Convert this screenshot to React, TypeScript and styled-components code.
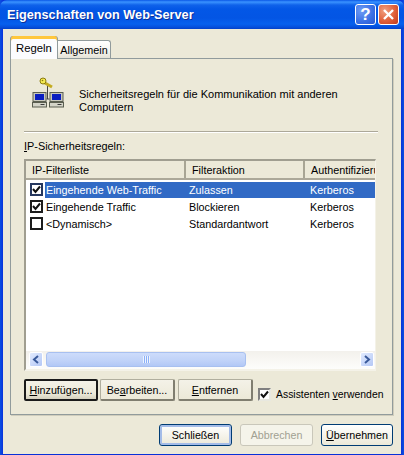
import React from "react";
import styled, { createGlobalStyle } from "styled-components";

const Global = createGlobalStyle`
  html, body { margin: 0; padding: 0; background: #0a3ad0; }
  #root { width: 404px; height: 455px; overflow: hidden; }
  * { box-sizing: border-box; }
`;

const Win = styled.div`
  width: 404px; height: 455px;
  display: flex; flex-direction: column;
  background: linear-gradient(90deg, #0a50e0 0, #0a3ee0 2px, #0831d9 3px, #0831d9 401px, #0a50e0 404px);
  font-family: "Liberation Sans", Arial, sans-serif;
  font-size: 10.8px; color: #000;
  padding: 0 3px 3px;
`;
const TitleBar = styled.div`
  height: 29px; flex: none; margin: 0 -3px;
  padding: 0 5px 0 7px;
  display: flex; align-items: center; justify-content: space-between;
  border-radius: 7px 7px 0 0;
  background: linear-gradient(180deg, #0a58e6 0, #3a93ff 2px, #0f62ea 5px, #0357e6 9px, #0355e4 18px, #0660ee 24px, #0550dd 27px, #0340c8 29px);
`;
const Title = styled.div`
  color: #fff; font-weight: 700; font-size: 12.7px;
  text-shadow: 1px 1px 0 #0c2f98;
`;
const TitleButtons = styled.div`display: flex; gap: 2px;`;
const Cap = styled.div<{ $red?: boolean }>`
  width: 21px; height: 21px; border: 1px solid #fff; border-radius: 3px;
  display: flex; align-items: center; justify-content: center;
  color: #fff; font: 700 17px "Liberation Sans", sans-serif;
  background: ${(p) => p.$red
    ? "radial-gradient(circle at 30% 30%, #f0a080, #e0603a 55%, #c03a1c)"
    : "radial-gradient(circle at 30% 30%, #6f9cf4, #3a6fe4 60%, #2a58d0)"};
`;
const Client = styled.div`
  flex: 1; background: #ece9d8;
  display: flex; flex-direction: column;
  padding: 7px 8px 8px 7px;
`;
const Tabs = styled.div`display: flex; align-items: flex-end; height: 22px; flex: none; position: relative; z-index: 1;`;
const Tab = styled.div<{ $active?: boolean }>`
  display: flex; align-items: center; justify-content: center;
  ${(p) => p.$active ? `
    width: 48px; background: #fcfcfe; font-size: 11.3px;
    border: 1px solid #919b9c; border-bottom: 0; border-top: 0;
    box-shadow: inset 0 3px 0 #ffc73c, inset 0 1px 0 #e68b2c;
    border-radius: 3px 3px 0 0; padding-top: 1px; margin-bottom: -1px; height: 23px;
  ` : `
    width: 53px; height: 18px; font-size: 10.8px;
    background: linear-gradient(180deg, #fff, #f4f3ee 60%, #e4e2d6);
    border: 1px solid #919b9c; border-left: 0; border-bottom: 0;
    border-radius: 0 3px 0 0;
  `}
`;
const Panel = styled.div`
  height: 357px; flex: none;
  background: #ece9d8;
  border: 1px solid #919b9c;
  box-shadow: 1px 1px 0 #d0cdbc;
  padding: 0 14px 0 13px;
  display: flex; flex-direction: column;
`;
const Intro = styled.div`
  height: 73px; flex: none;
  display: flex; align-items: flex-start;
  padding: 18px 0 0 8px;
  border-bottom: 1px solid #aca899;
  box-shadow: 0 1px 0 #fff;
`;
const IntroText = styled.div`
  margin: 11px 0 0 15px; width: 270px; line-height: 13px; font-size: 11px;
`;
const ListLabel = styled.div`
  margin-top: 8px; height: 13px; line-height: 13px; font-size: 10.9px;
`;
const ListView = styled.div`
  margin-top: 6px; width: 352px; height: 212px; flex: none;
  border-style: solid;
  border-color: #a09e90 #f4f2e8 #f4f2e8 #a09e90;
  border-width: 2px 1px 2px 2px;
  background: #fff;
  display: flex; flex-direction: column;
  overflow: hidden;
`;
const Head = styled.div`
  height: 19px; flex: none; display: flex;
  background: #ece9d8; border-bottom: 2px solid #aca899;
`;
const HeadCell = styled.div<{ $w: number; $last?: boolean }>`
  width: ${(p) => p.$w}px; flex: none; padding-left: 6px;
  white-space: nowrap; overflow: hidden;
  display: flex; align-items: center;
  ${(p) => !p.$last && "border-right: 2px solid #a8a594;"}
`;
const Rows = styled.div`flex: 1; padding-top: 1px; min-height: 0;`;
const Row = styled.div`
  height: 17px; display: flex; align-items: center; padding-left: 4px;
`;
const Check = styled.div<{ $thin?: boolean; $focus?: boolean }>`
  width: 13px; height: 13px; flex: none;
  border: 2px solid ${(p) => (p.$focus ? "#24365e" : "#1c1c1c")}; background: #fff;
  display: flex; align-items: center; justify-content: center;
  ${(p) => p.$thin && "border-color: #808080 #e8e8e0 #e8e8e0 #808080;"}
`;
const RowBody = styled.div<{ $sel?: boolean }>`
  flex: 1; height: 16px; margin-left: 2px;
  display: flex; align-items: center;
  ${(p) => p.$sel && "background: #316ac5; color: #fff;"}
`;
const Cell = styled.div<{ $w: number }>`
  width: ${(p) => p.$w}px; flex: none; padding-left: 1px; white-space: nowrap; overflow: hidden;
`;
const HBar = styled.div`
  height: 18px; flex: none; display: flex; align-items: stretch;
  background: linear-gradient(180deg, #f3f1ec, #fdfdfb);
  padding: 1px 1px 2px 3px;
`;
const ArrowBtn = styled.div`
  width: 14px; flex: none; border-radius: 2px; border: 1px solid #fff;
  background: linear-gradient(135deg, #e2ebfe, #b4c8f6);
  display: flex; align-items: center; justify-content: center;
`;
const Thumb = styled.div`
  width: 200px; margin-left: 3px; border-radius: 3px; border: 1px solid #a8c0f0;
  background: linear-gradient(180deg, #cddcfb, #c0d2f8 60%, #b2c8f6);
  display: flex; align-items: center; justify-content: center;
`;
const Grip = styled.div`
  width: 7px; height: 7px;
  background: repeating-linear-gradient(90deg, #eef4fe 0 1px, #8cb0f8 1px 2px);
`;
const Spacer = styled.div`flex: 1;`;
const Actions = styled.div`
  margin-top: 8px; display: flex; align-items: center;
`;
const Btn = styled.button<{ $w: number; $default?: boolean; $blue?: boolean; $off?: boolean; $ml?: number }>`
  width: ${(p) => p.$w}px; height: 22px; flex: none;
  margin-left: ${(p) => p.$ml ?? 0}px;
  padding: 0; font: 10.7px "Liberation Sans", Arial, sans-serif; color: #000;
  border-radius: 3px;
  background: linear-gradient(180deg, #fff 0, #f4f3ec 70%, #dcd8c8 100%);
  border: 1px solid #003c74;
  ${(p) => p.$default && "border: 2px solid #1a1a1a; border-radius: 2px; background: linear-gradient(180deg,#f4f2e8,#ece9d8 70%,#d4d0be);"}
  ${(p) => !p.$default && !p.$blue && !p.$off && "border: 1px solid #b0ae9e; border-right: 2px solid #807e70; border-bottom: 2px solid #807e70; border-radius: 2px; background: linear-gradient(180deg,#f4f2e8,#ece9d8);"}
  ${(p) => p.$blue && "box-shadow: inset 0 0 0 2px #a4bce8; background: linear-gradient(180deg,#fff,#ece9d8);"}
  ${(p) => p.$off && "border-color: #c9c7ba; color: #a1a192; background: #f5f4ea;"}
`;
const PlainBlueBtn = styled(Btn)`box-shadow: none;`;
const WizardCheck = styled.div`
  margin-left: 5px; display: flex; align-items: center; gap: 5px; white-space: nowrap; font-size: 10.4px; padding-top: 8px;
`;
const Footer = styled.div`
  margin-top: 9px; display: flex; justify-content: flex-end; gap: 8px;
`;

const Tick = () => (
  <svg width="9" height="9" viewBox="0 0 9 9"><path d="M1 4 L3.5 7 L8 1.5" fill="none" stroke="#111" strokeWidth="2" /></svg>
);
const Computer = ({ x }: { x: number }) => (
  <g transform={`translate(${x} 0)`}>
    <rect x="0" y="15" width="14" height="10" fill="#5a5e50" />
    <rect x="1" y="16" width="12" height="8" fill="#c8c8bc" />
    <rect x="2.5" y="17" width="9" height="6" fill="#0a1ec0" />
    <rect x="0" y="25.5" width="14" height="4.5" fill="#d4d4c8" stroke="#5a5e50" strokeWidth="1" />
    <rect x="8" y="27" width="4" height="1" fill="#3a3a3a" />
  </g>
);
const RuleIcon = () => (
  <svg width="32" height="32" viewBox="0 0 32 32">
    <Computer x={0.5} />
    <Computer x={17.5} />
    <path d="M14.5 22h3M15.5 22v-13" stroke="#444" fill="none" />
    <path d="M12 5.5 L20 10" stroke="#c4ac20" strokeWidth="3" />
    <circle cx="11" cy="4" r="3" fill="#f4ea50" stroke="#8a7a10" />
    <circle cx="10.5" cy="3.5" r="0.8" fill="#8a7a10" />
  </svg>
);
const Arrow = ({ right }: { right?: boolean }) => (
  <svg width="8" height="9" viewBox="0 0 8 9">
    <path d={right ? "M2 1 L6 4.5 L2 8" : "M6 1 L2 4.5 L6 8"} fill="none" stroke="#3a5a9a" strokeWidth="2" />
  </svg>
);

const rows = [
  { a: "Eingehende Web-Traffic", b: "Zulassen", on: true, sel: true },
  { a: "Eingehende Traffic", b: "Blockieren", on: true },
  { a: "<Dynamisch>", b: "Standardantwort", on: false },
];

export default function App() {
  return (
    <Win>
      <Global />
      <TitleBar>
        <Title>Eigenschaften von Web-Server</Title>
        <TitleButtons>
          <Cap>?</Cap>
          <Cap $red>
            <svg width="13" height="13" viewBox="0 0 13 13"><path d="M2 2 L11 11 M11 2 L2 11" stroke="#fff" strokeWidth="2.4" /></svg>
          </Cap>
        </TitleButtons>
      </TitleBar>
      <Client>
        <Tabs>
          <Tab $active>Regeln</Tab>
          <Tab>Allgemein</Tab>
        </Tabs>
        <Panel>
          <Intro>
            <RuleIcon />
            <IntroText>Sicherheitsregeln für die Kommunikation mit anderen Computern</IntroText>
          </Intro>
          <ListLabel><u>I</u>P-Sicherheitsregeln:</ListLabel>
          <ListView>
            <Head>
              <HeadCell $w={160}>IP-Filterliste</HeadCell>
              <HeadCell $w={119}>Filteraktion</HeadCell>
              <HeadCell $w={70} $last>Authentifizierung</HeadCell>
            </Head>
            <Rows>
              {rows.map((r) => (
                <Row key={r.a}>
                  <Check $focus={r.sel}>{r.on && <Tick />}</Check>
                  <RowBody $sel={r.sel}>
                    <Cell $w={143}>{r.a}</Cell>
                    <Cell $w={121}>{r.b}</Cell>
                    <Cell $w={60}>Kerberos</Cell>
                  </RowBody>
                </Row>
              ))}
            </Rows>
            <HBar>
              <ArrowBtn><Arrow /></ArrowBtn>
              <Thumb><Grip /></Thumb>
              <Spacer />
              <ArrowBtn><Arrow right /></ArrowBtn>
            </HBar>
          </ListView>
          <Actions>
            <Btn $w={74} $default><u>H</u>inzufügen...</Btn>
            <Btn $w={75} $ml={2}>Be<u>a</u>rbeiten...</Btn>
            <Btn $w={75} $ml={3}><u>E</u>ntfernen</Btn>
            <WizardCheck>
              <Check $thin><Tick /></Check>
              <span>Assistenten <u>v</u>erwenden</span>
            </WizardCheck>
          </Actions>
        </Panel>
        <Footer>
          <Btn $w={73} $blue>Schließen</Btn>
          <Btn $w={73} $off>Abbrechen</Btn>
          <PlainBlueBtn $w={72} $blue><u>Ü</u>bernehmen</PlainBlueBtn>
        </Footer>
      </Client>
    </Win>
  );
}
